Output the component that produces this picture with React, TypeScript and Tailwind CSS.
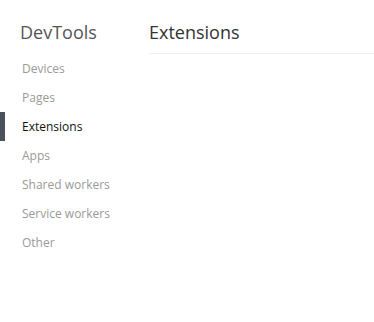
import React from "react";

const items = ["Devices", "Pages", "Extensions", "Apps", "Shared workers", "Service workers", "Other"];

export default function App() {
  return (
    <div className="flex w-[374px] h-[322px] bg-white" style={{ fontFamily: '"Open Sans", "Noto Sans", sans-serif' }}>
      <div className="w-[149px] shrink-0 pt-[19px]">
        <div className="pl-[20px] text-[18px] leading-[26px] text-[#555]">DevTools</div>
        <div className="mt-[9px] flex flex-col">
          {items.map((it) => (
            <div key={it} className="relative h-[29px] flex items-center pl-[22px] text-[12px]">
              {it === "Extensions" && <div className="absolute left-0 top-0 w-[5px] h-[29px] bg-[#4a505c]" />}
              <span className={it === "Extensions" ? "text-[#111]" : "text-[#999]"}>{it}</span>
            </div>
          ))}
        </div>
      </div>
      <div className="flex-1 pt-[19px]">
        <div className="text-[18px] leading-[26px] text-[#333] pb-[8px] border-b border-[#eeeeee]">Extensions</div>
      </div>
    </div>
  );
}
